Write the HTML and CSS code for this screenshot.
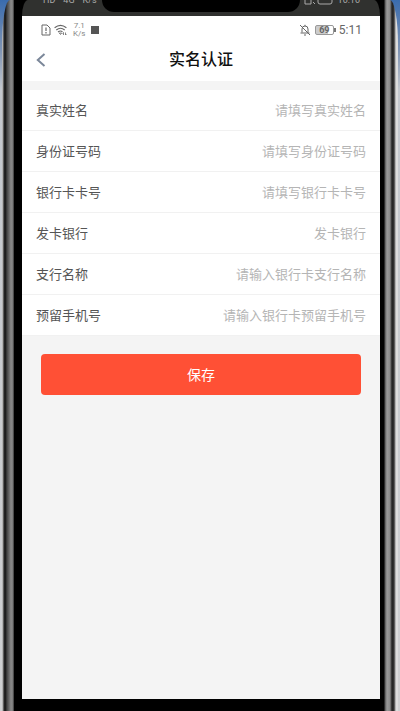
FILE: index.html
```html
<!DOCTYPE html>
<html lang="zh-CN">

<head>
    <meta charset="UTF-8">
    <meta name="viewport" content="width=device-width, initial-scale=1.0">
    <title>实名认证</title>
    <link rel="stylesheet" href="styles.css">
</head>

<body>
    <div class="phone">
        <div class="bezel">
            <div class="outer-bar">
                <div class="outer-left"><span>HD</span><span>4G</span><span>K/s</span><span>■</span></div>
                <div class="notch"></div>
                <div class="outer-right">
                    <svg width="30" height="12" viewBox="0 0 30 12" fill="none" stroke="#aaa">
                        <path d="M1 2v7h6V4M9 7l2 2" />
                        <rect x="14" y="1" width="14" height="8" rx="2" />
                    </svg>
                    <span>10:10</span>
                </div>
            </div>

            <div class="screen">
                <div class="status-bar">
                    <svg class="sim" width="10" height="12" viewBox="0 0 10 12" fill="none" stroke="#666">
                        <path d="M1 1h5l3 3v7H1z" />
                        <path d="M5 3.500v3.500M5 8v1.500" stroke-width="1.200" />
                    </svg>
                    <svg class="wifi" width="14" height="12" viewBox="0 0 14 12" fill="none" stroke="#666" stroke-width="1.100">
                        <path d="M.6 3.800Q6.500-1 12.400 3.800M2.300 6Q6.500 2.500 10.700 6M4 8Q6.500 6 8.500 7.800" />
                        <path d="M5.300 9L6.500 10.500 7.600 9zM9.500 11V8.500l-1 1M11.500 8.500V11l1-1" stroke-width=".8" />
                    </svg>
                    <span class="speed">7.1<br>K/s</span>
                    <span class="square"></span>
                    <svg class="bell" width="12" height="12" viewBox="0 0 12 12" fill="none" stroke="#666">
                        <path d="M3 8.500V5Q3 2 6 2T9 5v3.500M1.500 9h9M5 11h2M6 .8V2M1 1l10 10" />
                    </svg>
                    <span class="battery">69</span>
                    <span class="clock">5:11</span>
                </div>

                <header class="nav">
                    <button class="back" type="button" aria-label="返回">
                        <svg width="10" height="14" viewBox="0 0 10 14" fill="none" stroke="#7b8799" stroke-width="2">
                            <path d="M8.500 1L1.800 7l6.700 6" />
                        </svg>
                    </button>
                    <h1>实名认证</h1>
                </header>

                <form class="form">
                    <div class="row">
                        <label for="name">真实姓名</label>
                        <input type="text" id="name" placeholder="请填写真实姓名">
                    </div>
                    <div class="row">
                        <label for="idno">身份证号码</label>
                        <input type="text" id="idno" placeholder="请填写身份证号码">
                    </div>
                    <div class="row">
                        <label for="card">银行卡卡号</label>
                        <input type="text" id="card" placeholder="请填写银行卡卡号">
                    </div>
                    <div class="row">
                        <label for="bank">发卡银行</label>
                        <input type="text" id="bank" placeholder="发卡银行">
                    </div>
                    <div class="row">
                        <label for="branch">支行名称</label>
                        <input type="text" id="branch" placeholder="请输入银行卡支行名称">
                    </div>
                    <div class="row">
                        <label for="tel">预留手机号</label>
                        <input type="tel" id="tel" placeholder="请输入银行卡预留手机号">
                    </div>
                    <div class="actions">
                        <button class="save" type="button">保存</button>
                    </div>
                </form>
            </div>
        </div>
    </div>
</body>

</html>
```

FILE: styles.css
```css
* {
    box-sizing: border-box;
}

body {
    margin: 0;
    font-family: Roboto, "Noto Sans CJK SC", sans-serif;
    background: linear-gradient(#3a6cae, #7e93b3 50px, #c4c8ce 90px, #cfd0d2);
}

/* metal frame of the phone */
.phone {
    display: flex;
    min-height: 100vh;
    margin: 0 2px;
    padding: 0 14px 0 12px;
    border-radius: 8px 8px 0 0 / 44px 44px 0 0;
    background:
        linear-gradient(90deg, #ddd 0, #333 2px, #111 3px, #444 5px, #666 7px, #8a8a8a 9px, #777 11px, #222 12px) left / 12px 100% no-repeat,
        linear-gradient(270deg, #ddd 0, #ddd 2px, #333 4px, #222 6px, #888 8px, #999 11px, #555 13px, #000 14px) right / 14px 100% no-repeat,
        #000;
}

.bezel {
    flex: 1;
    display: flex;
    flex-direction: column;
    padding: 0 4px 12px 8px;
    border-radius: 10px 10px 0 0 / 36px 36px 0 0;
    background: #000;
}

.outer-bar {
    display: flex;
    justify-content: space-between;
    height: 16px;
    overflow: hidden;
    border-radius: 6px 6px 0 0 / 16px 16px 0 0;
    background: #30312f;
    color: #aaa;
    font-size: 9px;
    line-height: 10px;
}

.outer-left,
.outer-right {
    display: flex;
    width: 80px;
    height: 10px;
    margin-top: -5px;
}

.outer-left {
    gap: 8px;
    padding-left: 21px;
    white-space: nowrap;
}

.outer-right {
    justify-content: flex-end;
    gap: 4px;
    padding-right: 20px;
}

.notch {
    flex: 1;
    height: 12px;
    border-radius: 0 0 14px 14px;
    background: #000;
}

.screen {
    flex: 1;
    background: #f4f4f4;
}

.status-bar {
    display: flex;
    align-items: center;
    height: 27px;
    padding: 0 18px 0 19px;
    background: #fff;
    color: #666;
}

.wifi {
    margin-left: 3px;
}

.speed {
    margin-left: 5px;
    color: #888;
    font-size: 8px;
    line-height: 8px;
    text-align: center;
}

.square {
    width: 8px;
    height: 8px;
    margin-left: 6px;
    background: #555;
}

.bell {
    margin-left: auto;
}

.battery {
    position: relative;
    width: 19px;
    height: 10px;
    margin-left: 4px;
    border: 1px solid #999;
    border-radius: 2px;
    background: linear-gradient(90deg, #ccc 70%, #fff 70%);
    font-size: 9px;
    font-weight: bold;
    line-height: 8px;
    text-align: center;
}

.battery::after {
    content: "";
    position: absolute;
    top: 2px;
    right: -3px;
    width: 2px;
    height: 4px;
    background: #777;
}

.clock {
    margin-left: 5px;
    font-size: 12px;
}

.nav {
    display: flex;
    align-items: center;
    height: 38px;
    padding: 0 14px 4px;
    background: #fff;
}

.back {
    display: flex;
    width: 20px;
    padding: 0;
    border: none;
    background: none;
    cursor: pointer;
}

.nav h1 {
    flex: 1;
    margin: 0 20px 0 0;
    color: #111;
    font-size: 16px;
    font-weight: 500;
    line-height: 24px;
    text-align: center;
}

.form {
    padding-top: 9px;
}

.row {
    display: flex;
    align-items: center;
    height: 41px;
    padding: 2px 14px 0;
    border-bottom: 1px solid #f1f1f1;
    background: #fff;
    color: #555;
    font-size: 13px;
    line-height: 18px;
}

.row input {
    flex: 1;
    min-width: 0;
    padding: 0;
    border: none;
    outline: none;
    background: none;
    color: #555;
    font: inherit;
    text-align: right;
}

.row input::placeholder {
    color: #b5b5b5;
}

.actions {
    padding: 18px 19px;
}

.save {
    display: block;
    width: 100%;
    height: 41px;
    padding: 0 0 2px;
    border: none;
    border-radius: 4px;
    background: #ff5035;
    color: #fff;
    font-family: inherit;
    font-size: 14px;
    cursor: pointer;
}
```
